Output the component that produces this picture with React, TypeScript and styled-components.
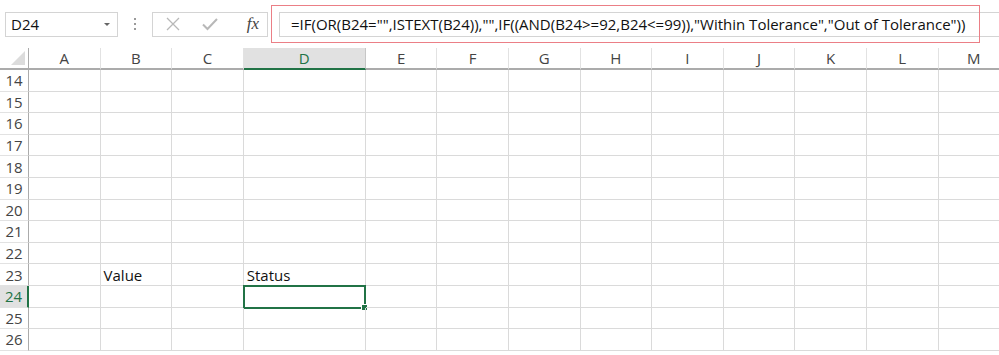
import React from "react";
import styled, { createGlobalStyle, css } from "styled-components";

const GlobalStyle = createGlobalStyle`
  html, body {
    margin: 0;
    padding: 0;
    background: #ffffff;
  }
  body {
    font-family: "Open Sans", "Noto Sans", sans-serif;
    color: #222;
    overflow: hidden;
  }
`;

const GREEN = "#217346";
const GRID = "#dadada";
const COL_W = 71.6;

const columns = ["A", "B", "C", "D", "E", "F", "G", "H", "I", "J", "K", "L", "M"];
const rows = [14, 15, 16, 17, 18, 19, 20, 21, 22, 23, 24, 25, 26];

const cellText: Record<string, string> = {
  B23: "Value",
  D23: "Status",
};

const Page = styled.div`
  width: 999px;
  height: 355px;
  overflow: hidden;
  display: flex;
  flex-direction: column;
`;

const TopBar = styled.div`
  position: relative;
  height: 48px;
  display: flex;
  align-items: center;
  padding-left: 5px;
  box-sizing: border-box;
`;

const NameBox = styled.div`
  width: 113px;
  height: 25px;
  box-sizing: border-box;
  border: 1px solid #d4d4d4;
  display: flex;
  align-items: center;
  justify-content: space-between;
  padding: 0 7px 0 5px;
  font-size: 15px;
  color: #111;
`;

const Caret = styled.span`
  width: 0;
  height: 0;
  border-left: 3px solid transparent;
  border-right: 3px solid transparent;
  border-top: 3px solid #666;
`;

const Dots = styled.div`
  width: 34px;
  display: flex;
  flex-direction: column;
  align-items: center;
  gap: 3px;

  span {
    width: 2px;
    height: 2px;
    background: #9a9a9a;
  }
`;

const ActionBox = styled.div`
  width: 116px;
  height: 25px;
  box-sizing: border-box;
  border: 1px solid #d4d4d4;
  display: flex;
  align-items: center;
  padding: 0 6px 0 13px;
`;

const ActionIcon = styled.div`
  width: 36px;
  display: flex;
  align-items: center;
  justify-content: flex-start;
`;

const FxLabel = styled.span`
  font-family: "Liberation Serif", "DejaVu Serif", serif;
  font-style: italic;
  font-size: 17px;
  color: #444;
  margin-left: auto;
  margin-right: 2px;
`;

const FormulaInput = styled.div`
  margin-left: 11px;
  flex: 1;
  height: 25px;
  box-sizing: border-box;
  border: 1px solid #d4d4d4;
  border-right: none;
  display: flex;
  align-items: center;
  padding-left: 11px;
  font-size: 15px;
  white-space: nowrap;
  color: #111;
`;

const Highlight = styled.div`
  position: absolute;
  left: 271px;
  top: 5px;
  width: 709px;
  height: 38px;
  box-sizing: border-box;
  border: 1.5px solid #eb7f86;
  pointer-events: none;
`;

const Sheet = styled.div`
  display: grid;
  grid-template-columns: 29px repeat(3, ${COL_W}px) 122px repeat(9, ${COL_W}px);
  grid-template-rows: 22px;
  grid-auto-rows: 21.6px;
`;

const Corner = styled.div`
  position: relative;
  box-sizing: border-box;
  border-right: 1px solid #ababab;
  border-bottom: 2px solid #ababab;
  overflow: hidden;

  &::after {
    content: "";
    position: absolute;
    right: 3px;
    bottom: 3px;
    width: 0;
    height: 0;
    border-left: 14px solid transparent;
    border-bottom: 14px solid #dcdcdc;
  }
`;

const ColHeader = styled.div<{ $active?: boolean }>`
  box-sizing: border-box;
  display: flex;
  align-items: center;
  justify-content: center;
  font-size: 15px;
  color: #444;
  border-right: 1px solid #e2e2e2;
  border-bottom: 2px solid #ababab;
  ${(p) =>
    p.$active &&
    css`
      background: #e1e1e1;
      color: ${GREEN};
      border-bottom-color: ${GREEN};
      border-right-color: #c6c6c6;
    `}
`;

const RowHeader = styled.div<{ $active?: boolean }>`
  box-sizing: border-box;
  display: flex;
  align-items: center;
  justify-content: center;
  font-size: 15px;
  color: #444;
  border-right: 1px solid #ababab;
  border-bottom: 1px solid #e2e2e2;
  ${(p) =>
    p.$active &&
    css`
      background: #e1e1e1;
      color: ${GREEN};
      border-right: 2px solid ${GREEN};
    `}
`;

const Cell = styled.div`
  position: relative;
  box-sizing: border-box;
  border-right: 1px solid ${GRID};
  border-bottom: 1px solid ${GRID};
  font-size: 15px;
  color: #111;
  padding: 0 3px;
  display: flex;
  align-items: flex-end;
  line-height: 19px;
  white-space: nowrap;
`;

const SelectionFrame = styled.span`
  position: absolute;
  left: -1px;
  top: -1px;
  right: -1px;
  bottom: -2px;
  border: 2px solid ${GREEN};
  pointer-events: none;
`;

const FillHandle = styled.span`
  position: absolute;
  right: -4px;
  bottom: -4px;
  width: 5px;
  height: 5px;
  background: ${GREEN};
  border: 1px solid #fff;
`;

function CrossIcon() {
  return (
    <svg width="14" height="14" viewBox="0 0 14 14">
      <path d="M1 1 L13 13 M13 1 L1 13" stroke="#b8b8b8" strokeWidth="1.3" fill="none" />
    </svg>
  );
}

function CheckIcon() {
  return (
    <svg width="16" height="14" viewBox="0 0 16 14">
      <path d="M1 7.5 L5.5 12 L15 2" stroke="#b8b8b8" strokeWidth="2" fill="none" />
    </svg>
  );
}

export default function App() {
  const formula =
    '=IF(OR(B24="",ISTEXT(B24)),"",IF((AND(B24>=92,B24<=99)),"Within Tolerance","Out of Tolerance"))';

  return (
    <Page>
      <GlobalStyle />
      <TopBar>
        <NameBox>
          <span>D24</span>
          <Caret />
        </NameBox>
        <Dots>
          <span />
          <span />
          <span />
        </Dots>
        <ActionBox>
          <ActionIcon>
            <CrossIcon />
          </ActionIcon>
          <ActionIcon>
            <CheckIcon />
          </ActionIcon>
          <FxLabel>fx</FxLabel>
        </ActionBox>
        <FormulaInput>{formula}</FormulaInput>
        <Highlight />
      </TopBar>
      <Sheet>
        <Corner />
        {columns.map((c) => (
          <ColHeader key={c} $active={c === "D"}>
            {c}
          </ColHeader>
        ))}
        {rows.map((r) => (
          <React.Fragment key={r}>
            <RowHeader $active={r === 24}>{r}</RowHeader>
            {columns.map((c) => {
              const id = `${c}${r}`;
              const selected = id === "D24";
              return (
                <Cell key={id}>
                  {cellText[id]}
                  {selected && (
                    <SelectionFrame>
                      <FillHandle />
                    </SelectionFrame>
                  )}
                </Cell>
              );
            })}
          </React.Fragment>
        ))}
      </Sheet>
    </Page>
  );
}
